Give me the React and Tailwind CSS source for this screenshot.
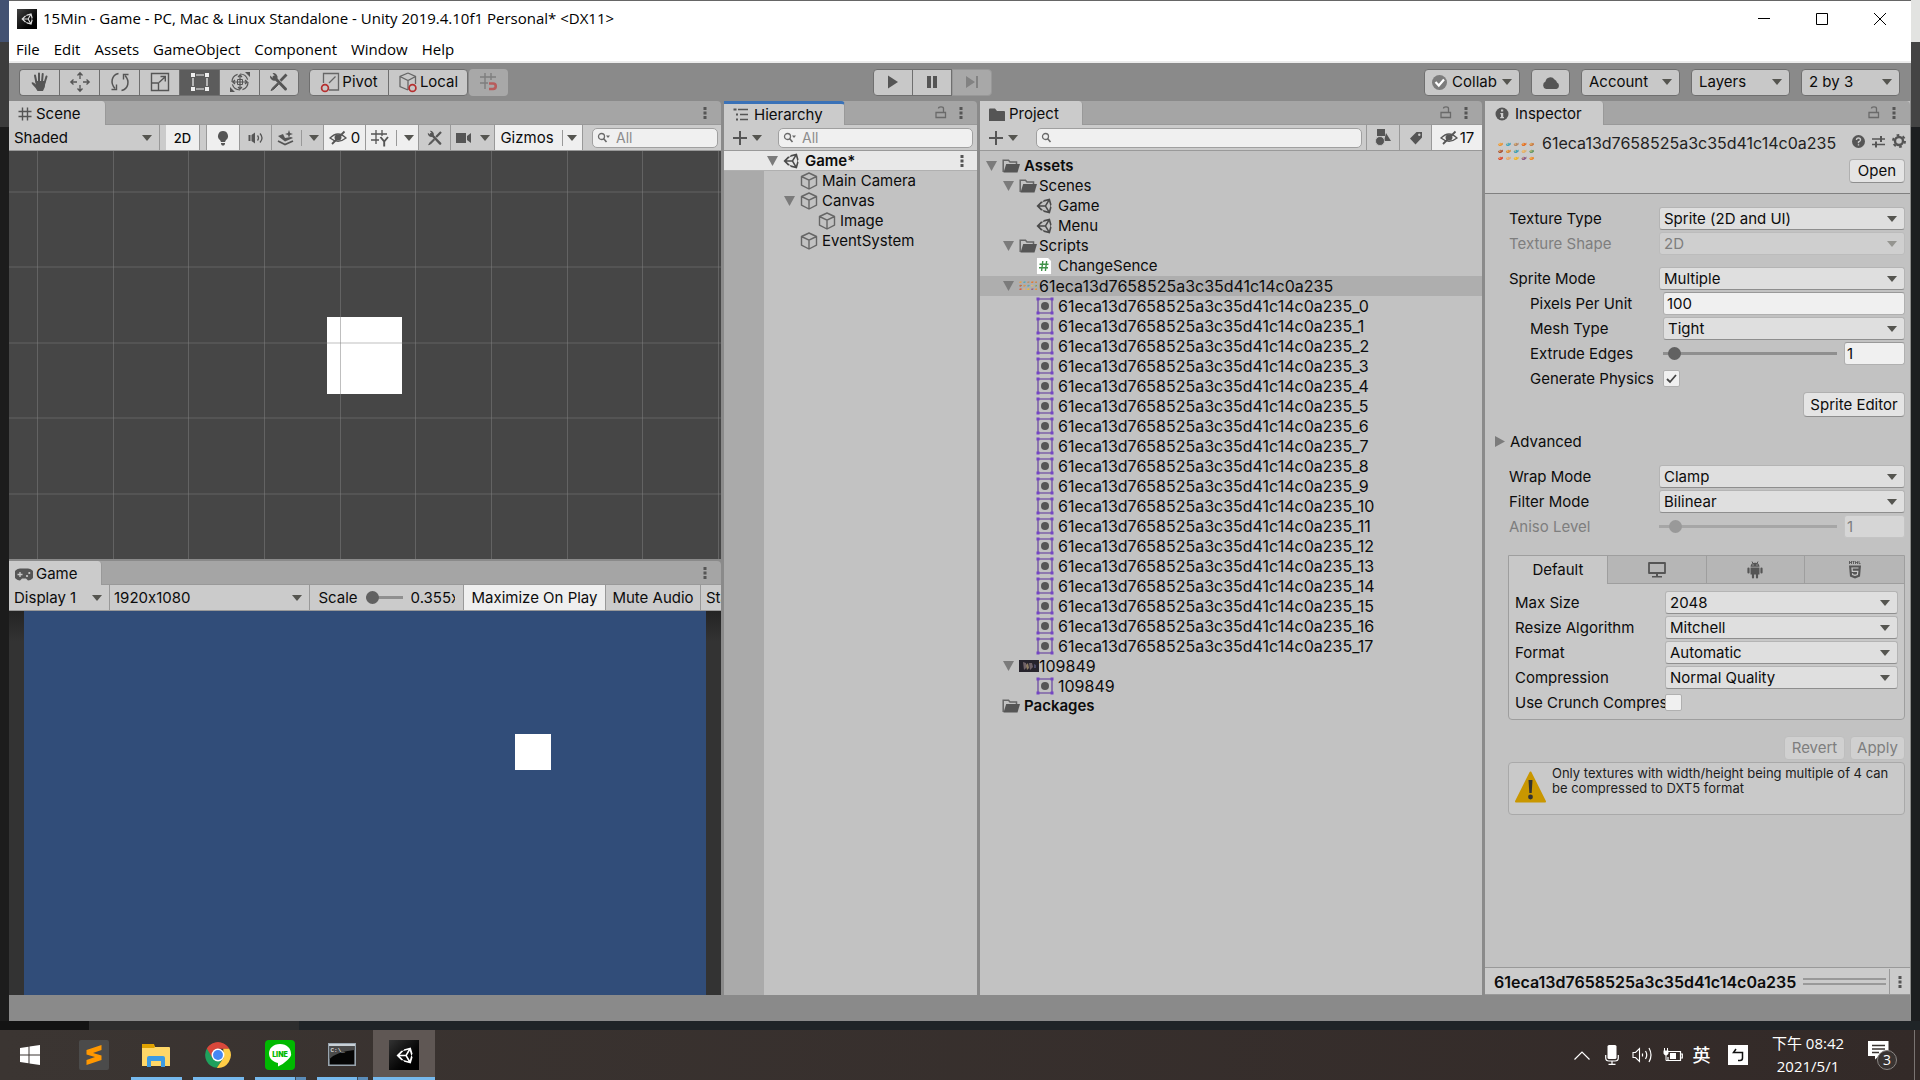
import { useState } from "react";
import clsx from "clsx";

const SPRITE = "61eca13d7658525a3c35d41c14c0a235";

/* ---------- icons ---------- */

const Svg = ({ w = 20, h = w, box, className, children }) => (
    <svg width={w} height={h} viewBox={box || `0 0 ${w} ${h}`} fill="none" className={clsx("shrink-0", className)} aria-hidden="true">
        {children}
    </svg>
)

const Arrow = ({ className = "text-[#555550]" }) => (
    <Svg w={10} h={6} className={className}><path d="M0 0H10L5 6Z" fill="currentColor" /></Svg>
)

const Fold = () => <Svg w={11} h={10} className="text-[#7b7b7b]"><path d="M0 0H11L5.5 10Z" fill="currentColor" /></Svg>

const Dots = () => (
    <Svg w={4} h={14} className="text-[#555]"><path d="M0.5 1h3v3h-3zM0.5 5.5h3v3h-3zM0.5 10h3v3h-3z" fill="currentColor" /></Svg>
)

const Lock = () => (
    <Svg w={12} h={13} className="text-[#6a6a6a]" >
        <path d="M1 6.500h9.500v5H1zM8.500 6V2.500C8.500 1 7.500 0.800 6 0.800S3.500 1 3.500 2.500" stroke="currentColor" strokeWidth="1.300" />
    </Svg>
)

const Plus = () => <Svg w={16} className="text-[#555]"><path d="M8 1v14M1 8h14" stroke="currentColor" strokeWidth="2" /></Svg>

const UnityIcon = ({ size = 16, className = "text-[#4a4a4a]" }) => (
    <Svg w={size} box="0 0 512 512" className={className}>
        <path fill="currentColor" d="M498.11 206.4L445.31 14.72 248.2 66.08 219 116.14l-59.2-.43L15.54 256l144.28 140.24 59.17-.43 29.22 50L445.31 497.14 498.11 305.6 468.15 256zM223.77 124.2L374.55 86.51 288 232.33H114.87zm0 263.63L114.87 279.71H288l86.55 145.81zm193.12 14L330.33 256l86.58-145.84L458.56 256z" />
    </Svg>
)

const Cube = ({ size = 18 }) => (
    <Svg w={size} box="0 0 18 18" className="text-[#666]">
        <path d="M9 1L16.500 4.500V13.200L9 17L1.500 13.200V4.500ZM1.500 4.500L9 8.200L16.500 4.500M9 8.200V17" stroke="currentColor" strokeWidth="1.400" strokeLinejoin="round" />
    </Svg>
)

const FolderOpen = () => (
    <Svg w={18} h={14}>
        <path d="M1.200 13V1.200H6.500L8 3H14.500V5" stroke="#666" strokeWidth="1.500" />
        <path d="M4.200 5H18L15.500 13.500H1.500Z" fill="#555" />
    </Svg>
)

const Folder = () => <Svg w={16} h={13}><path d="M0 1.500Q0 0.500 1 0.500H6L8 3H15Q16 3 16 4V13H0Z" fill="#555" /></Svg>

const SpriteIcon = () => (
    <Svg w={18}>
        <path d="M2 2H16V16H2Z" stroke="#7d62a8" strokeWidth="1.600" />
        <path d="M0.500 0.500h3v3h-3zM14.500 0.500h3v3h-3zM0.500 14.500h3v3h-3zM14.500 14.500h3v3h-3z" fill="#7445c4" />
        <circle cx="9" cy="9" r="4" fill="#555" />
    </Svg>
)

const ScriptIcon = () => (
    <Svg w={16} h={18}>
        <path d="M1 0.500H12L15.500 4V17.500H0.500V0.500Z" fill="#fff" stroke="#b0b0b0" strokeWidth="0.600" />
        <path d="M6.800 4L5.600 14M10.600 4L9.400 14M3.500 7.300H12.500M3 10.700H12" stroke="#3f9148" strokeWidth="1.400" />
    </Svg>
)

const critters = [
    ["#e8963c", "#3fa3c4", "#b3886a", "#e2702a", "#c9804a"],
    ["#a8553a", "#d98b3c", "#3f9fb8", "#e0b070", "#6a9a6a"],
    ["#d94a35", "#e0a878", "#edb52f", "#8a5a8a", "#e98a32"],
]

const SheetThumb = ({ w, h }) => (
    <Svg w={w} h={h} box="0 0 36 20">
        {critters.map((row, r) => row.map((color, c) => (
            <g key={r + "-" + c}>
                <path d={`M${c * 7.800 + 0.500} ${r * 7 + 2.500}q2 -3 4 -1l1 -1v2l-2 1.500h-2z`} fill={color} />
                <path d={`M${c * 7.800 + 1.500} ${r * 7 + 1.500}h1.500v1h-1.500z`} fill="#f6d27c" />
            </g>
        )))}
    </Svg>
)

const PhotoThumb = () => (
    <Svg w={20} h={12}>
        <path d="M0 0H20V12H0Z" fill="#26232c" />
        <path d="M4 2l3 1 1 4-3 3zM10 3h3l1 4-3 3z" fill="#6f6268" />
        <path d="M7 5l2-2 1 5-2 2z" fill="#8f7d62" />
        <path d="M15 4l2 1v3h-2z" fill="#4c4a66" />
    </Svg>
)

const EyeOff = () => (
    <Svg w={18} h={15} className="text-[#555]">
        <path d="M1 8Q9 0 17 8Q9 14.500 1 8Z" stroke="currentColor" strokeWidth="1.300" />
        <path d="M5.500 7.500a3.500 3 0 0 0 7 0a3.500 3 0 0 0-7 0" fill="currentColor" />
        <path d="M3 14L15.500 1.500" stroke="currentColor" strokeWidth="1.800" />
    </Svg>
)

const Tools = ({ size = 18 }) => (
    <Svg w={size} box="0 0 20 20" className="text-[#555]">
        <path d="M5 5L16.500 17" stroke="currentColor" strokeWidth="3" strokeLinecap="round" />
        <path d="M1 3.500L4 6L6 4.200L3.500 1A4.500 4.500 0 0 1 8.500 6.500L6.500 8.500A4.500 4.500 0 0 1 1 3.500Z" fill="currentColor" />
        <path d="M18.500 3.500L16.500 1.500L10.500 7.800L12.400 9.700Z" fill="currentColor" />
        <path d="M8.500 11L3.500 16L2 18.500L4.500 17.500L9.500 12.500Z" fill="currentColor" stroke="currentColor" />
    </Svg>
)

const GridIcon = ({ size = 14 }) => (
    <Svg w={size} box="0 0 14 14" className="text-[#555]">
        <path d="M4.500 0.500V13.500M9.500 0.500V13.500M0.500 4.500H13.500M0.500 9.500H13.500" stroke="currentColor" strokeWidth="1.400" />
    </Svg>
)

const SearchIcon = ({ menu }) => (
    <Svg w={14} h={12} className="text-[#6a6a6a]">
        <circle cx="4.500" cy="4.500" r="3" stroke="currentColor" strokeWidth="1.300" />
        <path d="M6.700 6.700L9.500 10" stroke="currentColor" strokeWidth="1.600" />
        {menu ? <path d="M9 3.500h4l-2 2.500z" fill="currentColor" /> : null}
    </Svg>
)

const transformTools = [
    {
        name: "Hand", icon: <Svg w={22} className="text-[#555]">
            <path d="M7.500 12L6 4.500M10 11V2.500M13 11L13.700 3M15.500 12L17.500 5.500" stroke="currentColor" strokeWidth="2" strokeLinecap="round" />
            <path d="M6.500 10H16.500Q16.500 16 14 20H8.500Q7 17 3 13Q2 11.500 3.200 11.200Q4.500 11 7 13.500Z" fill="currentColor" />
        </Svg>
    },
    {
        name: "Move", icon: <Svg w={22} className="text-[#555]">
            <path d="M11 2V8M11 14V20M2 11H8M14 11H20M8.500 4.500L11 1.800L13.500 4.500M8.500 17.500L11 20.200L13.500 17.500M4.500 8.500L1.800 11L4.500 13.500M17.500 8.500L20.200 11L17.500 13.500" stroke="currentColor" strokeWidth="1.300" />
        </Svg>
    },
    {
        name: "Rotate", icon: <Svg w={22} className="text-[#555]">
            <path d="M9.500 2.500C2.500 4 1 12 6 17.500M12.500 19.500C19.500 18 21 10 16 4.500" stroke="currentColor" strokeWidth="1.500" />
            <path d="M2.500 18.500H7.500V13.500M19.500 3.500H14.500V8.500" stroke="currentColor" strokeWidth="1.400" />
        </Svg>
    },
    {
        name: "Scale", icon: <Svg w={20} className="text-[#555]">
            <path d="M1.500 1.500H18.500V18.500H1.500ZM1.500 11H8.500V18.500" stroke="currentColor" strokeWidth="1.400" />
            <path d="M9 10.500L15 5M10.500 4.500H15.300V9.500" stroke="currentColor" strokeWidth="1.400" />
        </Svg>
    },
    {
        name: "Rect", icon: <Svg w={20} className="text-[#f0f0f0]">
            <path d="M3 6V14M17 6V14M6 3H14M6 17H14" stroke="currentColor" strokeWidth="1.200" />
            <path d="M1 1h4v4h-4zM15 1h4v4h-4zM1 15h4v4h-4zM15 15h4v4h-4z" fill="currentColor" />
        </Svg>
    },
    {
        name: "Transform", icon: <Svg w={22} className="text-[#555]">
            <circle cx="11" cy="11" r="8" stroke="currentColor" strokeWidth="1.200" strokeDasharray="10 2.500" />
            <path d="M11 4V18M4 11H18M9 6L11 3.800L13 6M9 16L11 18.200L13 16M6 9L3.800 11L6 13M16 9L18.200 11L16 13" stroke="currentColor" strokeWidth="1.200" />
            <path d="M8.500 8.500h5v5h-5z" stroke="currentColor" strokeWidth="1" />
            <path d="M16 1h5v5zM1 16v5h5z" fill="currentColor" />
        </Svg>
    },
    { name: "Custom", icon: <Tools size={20} /> },
]

/* ---------- shared controls ---------- */

const Select = ({ id, label, value, disabled, className = "", pad = "pl-[5px]" }) => (
    <span className={clsx("relative flex items-center min-w-0", className)}>
        <select
            id={id}
            aria-label={label}
            disabled={disabled}
            className={clsx("w-full h-full appearance-none bg-transparent pr-6 leading-5 outline-none disabled:opacity-100 disabled:text-[#7e7e7e]", pad)}
        >
            <option>{value}</option>
        </select>
        <Arrow className={clsx("absolute right-[7px] pointer-events-none", disabled ? "text-[#959590]" : "text-[#555550]")} />
    </span>
)

const boxed = "h-[23px] flex-1 rounded-[3px] border border-[#b4b4b4] border-b-[#8e8e8e] bg-[#dfdfdf]";
const boxedOff = "h-[23px] flex-1 rounded-[3px] border border-[#bcbcbc] bg-[#cfcfcf]";
const mainBtn = "h-[27px] flex items-center justify-center border border-[#6f6f6f] bg-[#c8c8c8]";

const Row = ({ id, label, indent, disabled, children }) => (
    <div className={clsx("flex h-[25px] items-center", indent && "pl-[21px]")}>
        <label htmlFor={id} className={clsx("shrink-0 overflow-hidden whitespace-nowrap", indent ? "w-[133px]" : "w-[150px]", disabled && "text-[#7e7e7e]")}>
            {label}
        </label>
        {children}
    </div>
)

const Popup = ({ id, label, value, disabled, indent }) => (
    <Row id={id} label={label} indent={indent} disabled={disabled}>
        <Select id={id} value={value} disabled={disabled} className={disabled ? boxedOff : boxed} pad="pl-1" />
    </Row>
)

const Slider = ({ id, label, disabled, indent }) => (
    <Row id={id} label={label} indent={indent} disabled={disabled}>
        <input
            id={id}
            type="range"
            min="0"
            max="16"
            defaultValue={indent ? "0.5" : "1"}
            step="0.5"
            disabled={disabled}
            className={clsx(
                "h-[13px] min-w-0 flex-1 appearance-none [&::-webkit-slider-thumb]:appearance-none [&::-webkit-slider-thumb]:size-[13px] [&::-webkit-slider-thumb]:rounded-full",
                disabled
                    ? "bg-[linear-gradient(transparent_5px,#a6a6a6_5px,#a6a6a6_8px,transparent_8px)] [&::-webkit-slider-thumb]:bg-[#999]"
                    : "bg-[linear-gradient(transparent_5px,#8f8f8f_5px,#8f8f8f_8px,transparent_8px)] [&::-webkit-slider-thumb]:bg-[#616161]"
            )}
        />
        <input
            aria-label={label + " value"}
            defaultValue="1"
            disabled={disabled}
            className={clsx("ml-[7px] h-[23px] w-[61px] rounded-[3px] border px-[2px] outline-none", disabled ? "border-[#c4c4c4] bg-[#d6d6d6] text-[#7e7e7e]" : "border-[#b0b0b0] border-t-[#999] bg-[#f0f0f0]")}
        />
    </Row>
)

const CheckBox = ({ id, checked }) => (
    <span className="relative flex">
        <input id={id} type="checkbox" defaultChecked={checked} className="peer size-[17px] appearance-none rounded-[2px] border border-[#b0b0b0] bg-[#f0f0f0]" />
        <Svg w={17} className="absolute left-0 top-0 hidden text-[#444] pointer-events-none peer-checked:block">
            <path d="M4 9L7 12L13 5" stroke="currentColor" strokeWidth="1.800" />
        </Svg>
    </span>
)

const TabBar = ({ icon, label, width, focused, lock }) => (
    <div className="flex h-6 shrink-0 items-center rounded-tr-[4px] border-b border-[#999] bg-[#a5a5a5] pr-[14px]">
        <button className={clsx("-mb-px flex h-6 items-center gap-1 rounded-tr-[4px] border-r border-[#999] bg-[#cbcbcb] pl-[9px] whitespace-nowrap", width, focused ? "border-t-[3px] border-t-[#3a72b8]" : "pt-[2px]")}>
            {icon}
            {label}
        </button>
        <span className="ml-auto flex items-center gap-3">
            {lock && <button aria-label={"Lock " + label}><Lock /></button>}
            <button aria-label={label + " menu"}><Dots /></button>
        </span>
    </div>
)

const Search = ({ placeholder, menu, label, className }) => (
    <span className={clsx("flex h-5 min-w-0 items-center gap-[5px] rounded-[5px] border border-[#a0a0a0] bg-[#f0f0f0] pl-1", className)}>
        <SearchIcon menu={menu} />
        <input type="search" aria-label={label} placeholder={placeholder} className="w-full min-w-0 bg-transparent text-[14px] outline-none placeholder:text-[#8c8c8c]" />
    </span>
)

const cell = "flex h-full shrink-0 items-center justify-center border-r border-[#999] whitespace-nowrap";

/* ---------- window header ---------- */

const TitleBar = () => (
    <header className="shrink-0 border-b-2 border-[#ececec] bg-white pb-[2px] font-['Open_Sans','Noto_Sans',sans-serif] text-black">
        <div className="flex h-9 items-center pr-[2px] pl-2">
            <span className="flex size-5 items-center justify-center bg-linear-to-br from-[#444] to-black">
                <UnityIcon size={12} className="text-[#ddd]" />
            </span>
            <h1 className="ml-[6px] pb-[2px] text-[15px]">15Min - Game - PC, Mac &amp; Linux Standalone - Unity 2019.4.10f1 Personal* &lt;DX11&gt;</h1>
            <div className="ml-auto flex">
                <button aria-label="Minimize" className="flex w-[58px] justify-center"><Svg w={12}><path d="M0 5.500H12" stroke="#000" /></Svg></button>
                <button aria-label="Maximize" className="flex w-[58px] justify-center"><Svg w={12}><path d="M0.500 0.500H11.500V11.500H0.500Z" stroke="#000" /></Svg></button>
                <button aria-label="Close" className="flex w-[58px] justify-center"><Svg w={12}><path d="M0 0L12 12M12 0L0 12" stroke="#000" /></Svg></button>
            </div>
        </div>
        <nav className="flex h-[22px] items-center gap-[14px] pt-[2px] pl-[7px] text-[15px]">
            {["File", "Edit", "Assets", "GameObject", "Component", "Window", "Help"].map((item) => (
                <button key={item} className="whitespace-nowrap">{item}</button>
            ))}
        </nav>
    </header>
)

const MainToolbar = () => {

    const [ tool, setTool ] = useState("Rect");

    return (
        <div className="grid h-[38px] shrink-0 grid-cols-[1fr_auto_1fr] items-center bg-[#8a8a8a] pr-[11px] pl-[10px]">
            <div className="flex">
                {transformTools.map(({ name, icon }, i) => (
                    <button
                        key={name}
                        aria-label={name + " tool"}
                        onClick={() => setTool(name)}
                        className={clsx(
                            "flex h-[27px] w-10 items-center justify-center border-y border-l border-[#6f6f6f]",
                            i == 0 && "rounded-l-[4px]",
                            i == 6 && "rounded-r-[4px] border-r",
                            tool == name ? "bg-[#5c5c5c]" : "bg-[#c8c8c8]"
                        )}
                    >
                        {icon}
                    </button>
                ))}
                <button className={clsx(mainBtn, "ml-[10px] w-20 gap-[2px] rounded-l-[4px]")}>
                    <Svg w={20} h={22}>
                        <path d="M3.500 12V2.500H18.500V19H9" stroke="#666" strokeWidth="1.300" />
                        <path d="M9 12L15.500 5.500" stroke="#666" strokeWidth="1.300" />
                        <circle cx="5" cy="17" r="3.400" stroke="#b52f2f" strokeWidth="1.700" />
                    </Svg>
                    Pivot
                </button>
                <button className={clsx(mainBtn, "-ml-px w-20 gap-[2px] rounded-r-[4px]")}>
                    <Svg w={20} h={22}>
                        <path d="M10 2L17.500 5.500V13M10 19L2 15.500V5.500L10 2M2 5.500L10 9.500L17.500 5.500M10 9.500V19" stroke="#666" strokeWidth="1.300" />
                        <circle cx="14.500" cy="17" r="3.400" fill="#c8c8c8" stroke="#b52f2f" strokeWidth="1.700" />
                    </Svg>
                    Local
                </button>
                <button disabled aria-label="Snap" className="ml-px flex h-[27px] w-[39px] items-center justify-center rounded-[4px] bg-[#a8a8a8]">
                    <Svg w={20}>
                        <path d="M6 1V17M12 1V8M1 5H17M1 11H9" stroke="#7e7e7e" strokeWidth="1.400" />
                        <path d="M10 11.500H14A2.500 2.500 0 0 1 14 17H10" stroke="#b85c5c" strokeWidth="2.600" />
                    </Svg>
                </button>
            </div>
            <div className="mr-[54px] flex">
                <button aria-label="Play" className={clsx(mainBtn, "w-10 rounded-l-[4px]")}><Svg w={12} h={14}><path d="M1 0.500L11 7L1 13.500Z" fill="#555" /></Svg></button>
                <button aria-label="Pause" className={clsx(mainBtn, "-ml-px w-10")}><Svg w={10} h={12}><path d="M0 0h4v12h-4zM6 0h4v12h-4z" fill="#555" /></Svg></button>
                <button aria-label="Step" disabled className="flex h-[27px] w-10 items-center justify-center rounded-r-[4px] border border-[#989898] bg-[#a8a8a8]">
                    <Svg w={14} h={12}><path d="M1 0L10 6L1 12ZM11 0h2v12h-2z" fill="#828282" /></Svg>
                </button>
            </div>
            <div className="flex justify-end gap-[11px]">
                <button className={clsx(mainBtn, "w-[96px] gap-[5px] rounded-[4px]")}>
                    <Svg w={15}><circle cx="7.500" cy="7.500" r="7.500" fill="#7c7c7c" /><path d="M3.500 7L6.800 10.500L12 4.500" stroke="#fff" strokeWidth="2.200" /></Svg>
                    Collab
                    <Arrow />
                </button>
                <button aria-label="Services" className={clsx(mainBtn, "w-[39px] rounded-[4px]")}>
                    <Svg w={18} h={13}><path d="M4 13A4 4 0 0 1 3.500 5.500A5 5 0 0 1 12.500 3.500A4 4 0 0 1 15 6.500A3.500 3.500 0 0 1 14.500 13Z" fill="#555" /></Svg>
                </button>
                {["Account", "Layers", "2 by 3"].map((item) => (
                    <Select key={item} label={item} value={item} pad="pl-[7px]" className="h-[27px] w-[99px] rounded-[4px] border border-[#6f6f6f] bg-[#c8c8c8]" />
                ))}
            </div>
        </div>
    )
}

/* ---------- scene and game ---------- */

const Scene = () => (
    <section className="flex min-h-0 min-w-0 flex-col">
        <TabBar label="Scene" width="w-[97px]" icon={<GridIcon />} />
        <div className="flex h-[26px] shrink-0 items-center border-b border-[#999] bg-[#cbcbcb]">
            <Select label="Shading mode" value="Shaded" className="h-full w-[151px] border-r border-[#999]" />
            <button className={clsx(cell, "ml-[6px] w-[34px] bg-[#efefef] text-[13px] font-medium")}>2D</button>
            <button aria-label="Lighting" className={clsx(cell, "ml-[6px] w-[34px] border-l bg-[#efefef]")}>
                <Svg w={12} h={16}><path d="M6 1A5 5 0 0 0 3 10L4 12H8L9 10A5 5 0 0 0 6 1ZM4 13h4v1l-1 1.500h-2l-1-1.500z" fill="#555" /></Svg>
            </button>
            <button aria-label="Audio" className={clsx(cell, "w-8")}>
                <Svg w={16} h={12}>
                    <path d="M0.500 3h2v6h-2zM3.500 3L7 0.500V11.500L3.500 9Z" fill="#555" />
                    <path d="M9.500 3.500Q11.500 6 9.500 8.500M12 1.500Q16 6 12 10.500" stroke="#555" strokeWidth="1.300" />
                </Svg>
            </button>
            <button aria-label="Effects" className={clsx(cell, "w-[52px] gap-[7px]")}>
                <Svg w={17} h={16}>
                    <path d="M1 6L6 4L8 8L14 7L16 8L8 11.500Z" fill="#555" />
                    <path d="M1 11L8 14.500L16 11" stroke="#555" strokeWidth="1.800" />
                    <path d="M12 0L13 3L16 4L13 5L12 8L11 5L8 4L11 3Z" fill="#555" />
                </Svg>
                <span className="h-4 w-px bg-[#999]"></span>
                <Arrow />
            </button>
            <button className={clsx(cell, "w-[42px] gap-1 bg-[#efefef]")}><EyeOff />0</button>
            <button aria-label="Grid axis" className={clsx(cell, "w-[53px] gap-[7px] bg-[#efefef]")}>
                <Svg w={18}>
                    <path d="M5 1V15M11 1V7M0 5H16M0 11H8" stroke="#555" strokeWidth="1.300" />
                    <path d="M9.500 8L13.200 12.500L17 8M13.200 12.500V17.500" stroke="#555" strokeWidth="1.900" />
                </Svg>
                <span className="h-4 w-px bg-[#999]"></span>
                <Arrow />
            </button>
            <button aria-label="Component tools" className={clsx(cell, "w-8")}><Tools size={16} /></button>
            <button aria-label="Camera" className={clsx(cell, "w-11 gap-2")}>
                <Svg w={16} h={12}><path d="M0 1h10v10h-10zM11 4L15 1V11L11 8Z" fill="#555" /></Svg>
                <Arrow />
            </button>
            <button className={clsx(cell, "w-[88px] gap-2 bg-[#efefef]")}>
                Gizmos
                <span className="-mr-1 h-4 w-px bg-[#999]"></span>
                <Arrow />
            </button>
            <Search label="Search scene" placeholder="All" menu className="mr-[3px] ml-[9px] flex-1" />
        </div>
        <div className="relative flex-1 overflow-hidden bg-[#464646]">
            <svg className="absolute inset-0 h-full w-full" aria-label="Scene view">
                <rect x="318" y="166" width="75" height="77" fill="#fff" />
                <g stroke="#808080" strokeOpacity="0.500">
                    {[28.5, 104.5, 179.5, 255.5, 331.5, 406.5, 482.5, 558.5, 633.5, 709.5].map((x) => <line key={x} x1={x} x2={x} y1="0" y2="100%" />)}
                </g>
                <g stroke="#808080" strokeOpacity="0.250" strokeWidth="2">
                    {[41, 116, 192, 267, 343].map((y) => <line key={y} y1={y} y2={y} x1="0" x2="100%" />)}
                </g>
            </svg>
        </div>
    </section>
)

const Game = () => (
    <section className="flex min-h-0 min-w-0 flex-col">
        <TabBar label="Game" width="w-[93px]" icon={
            <Svg w={18} h={13} className="-mr-px -ml-[3px]">
                <path d="M5 0.500H13A5 5 0 0 1 13 12.500L11 10.500H7L5 12.500A5 5 0 0 1 5 0.500Z" fill="#555" />
                <path d="M5 4V9M2.500 6.500H7.500" stroke="#cbcbcb" strokeWidth="1.300" />
                <circle cx="12" cy="8" r="1.100" fill="#cbcbcb" /><circle cx="14.300" cy="5" r="1.100" fill="#cbcbcb" />
            </Svg>
        } />
        <div className="flex h-[26px] shrink-0 items-center overflow-hidden border-b border-[#999] bg-[#cbcbcb]">
            <Select label="Display" value="Display 1" className="h-full w-[101px] shrink-0 border-r border-[#999]" />
            <Select label="Resolution" value="1920x1080" pad="pl-1" className="h-full w-[200px] shrink-0 border-r border-[#999]" />
            <div className={clsx(cell, "w-[154px] gap-2")}>
                <label htmlFor="scale">Scale</label>
                <input id="scale" type="range" min="1" max="5" defaultValue="1" className="h-[13px] w-[37px] appearance-none bg-[linear-gradient(transparent_5px,#8f8f8f_5px,#8f8f8f_8px,transparent_8px)] [&::-webkit-slider-thumb]:size-[13px] [&::-webkit-slider-thumb]:appearance-none [&::-webkit-slider-thumb]:rounded-full [&::-webkit-slider-thumb]:bg-[#616161]" />
                <span className="w-[44px] overflow-hidden">0.355x</span>
            </div>
            <button className={clsx(cell, "w-[142px] bg-[#efefef]")}>Maximize On Play</button>
            <button className={clsx(cell, "w-[95px]")}>Mute Audio</button>
            <button className="pl-[5px]">Stats</button>
        </div>
        <div className="flex flex-1 bg-linear-to-b from-[#242424] to-[#333] to-8% px-[15px]">
            <div className="relative flex-1 bg-[#314d79]">
                <div className="absolute top-[123px] left-[491px] size-9 bg-white"></div>
            </div>
        </div>
    </section>
)

/* ---------- hierarchy ---------- */

const objects = [
    { name: "Main Camera", pad: "pl-9" },
    { name: "Canvas", pad: "pl-5", open: true },
    { name: "Image", pad: "pl-[54px]" },
    { name: "EventSystem", pad: "pl-9" },
]

const Hierarchy = () => (
    <section className="flex min-h-0 flex-col">
        <TabBar label="Hierarchy" width="w-[121px]" focused lock icon={
            <Svg w={16} h={13} className="mr-px">
                <path d="M5 1.500H15M7 6.500H15M7 11.500H15" stroke="#555" strokeWidth="1.500" />
                <path d="M0.500 0.500h3v2h-3zM3 5.500h2v2h-2zM3 10.500h2v2h-2z" fill="#555" />
            </Svg>
        } />
        <div className="flex h-[26px] shrink-0 items-center border-b border-[#999] bg-[#cbcbcb] pr-1 pl-2">
            <button aria-label="Create object" className="flex items-center gap-1"><Plus /><Arrow /></button>
            <Search label="Search hierarchy" placeholder="All" menu className="ml-4 flex-1" />
        </div>
        <div className="flex h-5 shrink-0 items-center border-b border-[#b0b0b0] bg-[#e8e8e8] pr-[13px] pl-[43px]">
            <Fold />
            <span className="mr-[6px] ml-[5px]"><UnityIcon size={16} /></span>
            <b className="font-semibold">Game*</b>
            <button aria-label="Game scene menu" className="ml-auto"><Dots /></button>
        </div>
        <div className="flex-1 border-l-[40px] border-[#aaa] bg-[#c2c2c2]">
            <ul>
                {objects.map(({ name, pad, open }) => (
                    <li key={name} className={clsx("flex h-5 items-center whitespace-nowrap", pad)}>
                        {open && <span className="mr-[5px]"><Fold /></span>}
                        <Cube />
                        <span className="ml-1">{name}</span>
                    </li>
                ))}
            </ul>
        </div>
    </section>
)

/* ---------- project ---------- */

const assets = [
    { name: "Assets", pad: "pl-[6px]", icon: <FolderOpen />, fold: true, bold: true },
    { name: "Scenes", pad: "pl-[23px]", icon: <FolderOpen />, fold: true },
    { name: "Game", pad: "pl-14", icon: <UnityIcon /> },
    { name: "Menu", pad: "pl-14", icon: <UnityIcon /> },
    { name: "Scripts", pad: "pl-[23px]", icon: <FolderOpen />, fold: true },
    { name: "ChangeSence", pad: "pl-14", icon: <ScriptIcon /> },
    { name: SPRITE, pad: "pl-[23px]", icon: <SheetThumb w={18} h={10} />, fold: true, selected: true, long: true },
    ...Array.from({ length: 18 }, (_, i) => ({ name: SPRITE + "_" + i, pad: "pl-14", icon: <SpriteIcon />, long: true })),
    { name: "109849", pad: "pl-[23px]", icon: <PhotoThumb />, fold: true, long: true },
    { name: "109849", pad: "pl-14", icon: <SpriteIcon />, long: true },
    { name: "Packages", pad: "pl-[22px]", icon: <FolderOpen />, bold: true },
]

const Project = () => (
    <section className="flex min-h-0 flex-col">
        <TabBar label="Project" width="w-[103px]" lock icon={<Folder />} />
        <div className="flex h-[26px] shrink-0 items-center border-b border-[#999] bg-[#cbcbcb]">
            <button aria-label="Create asset" className="flex items-center gap-1 pl-2"><Plus /><Arrow /></button>
            <Search label="Search project" className="mr-1 ml-[18px] flex-1" />
            <button aria-label="Filter by type" className={clsx(cell, "w-[34px] border-l")}>
                <Svg w={16} h={17}><path d="M2 0h8v7h-8zM11 4L16 12H9Z" fill="#555" /><circle cx="5" cy="12" r="4.500" fill="#555" stroke="#cbcbcb" strokeWidth="0.800" /></Svg>
            </button>
            <button aria-label="Filter by label" className={clsx(cell, "w-8")}>
                <Svg w={14}><path d="M1 7.500L7.500 1H13V6.500L6.500 13.500Z" fill="#555" /><circle cx="10.300" cy="3.800" r="1.200" fill="#cbcbcb" /></Svg>
            </button>
            <button className="flex h-full w-[50px] items-center justify-center gap-[2px] bg-[#efefef]"><EyeOff />17</button>
        </div>
        <ul className="flex-1 overflow-hidden bg-[#c2c2c2] pt-[5px]">
            {assets.map(({ name, pad, icon, fold, bold, selected, long }, i) => (
                <li key={i} className={clsx("flex h-5 items-center whitespace-nowrap", pad, selected && "bg-[#aeaeae]", long && "text-[16px]")}>
                    {fold && <span className="mr-[5px]"><Fold /></span>}
                    <span className={clsx("flex shrink-0", fold && !bold ? "w-5" : "w-[22px]")}>{icon}</span>
                    {bold ? <b className="font-semibold">{name}</b> : name}
                </li>
            ))}
        </ul>
    </section>
)

/* ---------- inspector ---------- */

const platforms = [
    {
        name: "Standalone", icon: <Svg w={18} h={16}><path d="M1 1H17V11H1Z" stroke="#555" strokeWidth="1.800" strokeLinejoin="round" /><path d="M8 12h2v2h4v1.500h-10v-1.500h4z" fill="#555" /></Svg>
    },
    {
        name: "Android", icon: <Svg w={16} h={18}>
            <path d="M3.500 5.800Q3.800 2 8 1.800T12.500 5.800ZM3.500 6.600H12.500V13.500H3.500Z" fill="#555" />
            <path d="M5 0.500L6 2.500M11 0.500L10 2.500" stroke="#555" />
            <path d="M1.500 7.500V11.500M14.500 7.500V11.500M6 13V16.500M10 13V16.500" stroke="#555" strokeWidth="2.200" strokeLinecap="round" />
            <path d="M5.500 3.600h1v1h-1zM9.500 3.600h1v1h-1z" fill="#c8c8c8" />
        </Svg>
    },
    {
        name: "WebGL", icon: <Svg w={14} h={18}>
            <path d="M1.500 0v3M3.500 0v3M1.500 1.500h2M4.500 0.500h2M5.500 0.500v2.500M7.500 3V0.500L8.500 2L9.500 0.500V3M11 0v2.600h1.500" stroke="#555" strokeWidth="0.900" />
            <path d="M1 4.500H13L12 15.500L7 17.500L2 15.500Z" fill="#555" />
            <path d="M10.500 7H4L4.300 10.300H9.800L9.400 13.500L7 14.300L4.600 13.500L4.500 12.300" stroke="#c8c8c8" strokeWidth="1.200" />
        </Svg>
    },
]

const Inspector = () => {

    const [ ppu, setPpu ] = useState("100");

    return (
        <section className="flex min-h-0 flex-col bg-[#c2c2c2]">
            <TabBar label="Inspector" width="w-[119px]" lock icon={
                <Svg w={17} h={14}><circle cx="8" cy="7" r="6.500" fill="#555" /><path d="M7 2.500h2.200v2h-2.200zM6.300 6h2.900v4h0.800v1.300h-3.800v-1.300h0.800v-2.700h-0.700z" fill="#cbcbcb" /></Svg>
            } />
            <div className="flex h-[69px] shrink-0 border-b border-[#808080] bg-[#cbcbcb] pr-1 pl-3">
                <span className="pt-[17px]"><SheetThumb w={37} h={20} /></span>
                <div className="ml-2 min-w-0 flex-1">
                    <div className="flex items-center pt-[6px]">
                        <h2 className="min-w-0 flex-1 overflow-hidden text-[16px] leading-6 whitespace-nowrap text-[#222]">{SPRITE}</h2>
                        <span className="mb-1 ml-[9px] flex items-center gap-[7px]">
                            <button aria-label="Help"><Svg w={13}><circle cx="6.500" cy="6.500" r="6.500" fill="#555" /><path d="M4.500 5Q4.500 3 6.500 3T8.500 5Q8.500 6 6.500 7V8.200M6.500 9.200V10.600" stroke="#cbcbcb" strokeWidth="1.400" /></Svg></button>
                            <button aria-label="Presets"><Svg w={13}><path d="M0 4H13M0 9.500H13" stroke="#555" strokeWidth="1.500" /><path d="M8 1h2v6h-2zM3 6.500h2v6h-2z" fill="#555" /></Svg></button>
                            <button aria-label="Settings">
                                <Svg w={14}><circle cx="7" cy="7" r="4" stroke="#555" strokeWidth="2.400" /><circle cx="7" cy="7" r="6" stroke="#555" strokeWidth="2" strokeDasharray="2.700 3.580" /></Svg>
                            </button>
                        </span>
                    </div>
                    <button className="mt-1 mr-px ml-auto flex h-6 w-[56px] items-center justify-center rounded-[4px] border border-[#b0b0b0] border-b-[#8e8e8e] bg-[#e4e4e4]">Open</button>
                </div>
            </div>

            <form className="flex flex-1 flex-col pt-3 pr-[5px] pl-[23px]" onSubmit={(e) => e.preventDefault()}>
                <div className="pl-px">
                    <Popup id="textureType" label="Texture Type" value="Sprite (2D and UI)" />
                    <Popup id="textureShape" label="Texture Shape" value="2D" disabled />
                    <div className="mt-[10px]">
                        <Popup id="spriteMode" label="Sprite Mode" value="Multiple" />
                        <Row id="ppu" label="Pixels Per Unit" indent>
                            <input id="ppu" value={ppu} onChange={(e) => setPpu(e.target.value)} className="h-[23px] min-w-0 flex-1 rounded-[3px] border border-[#b0b0b0] border-t-[#999] bg-[#f0f0f0] px-[3px] outline-none" />
                        </Row>
                        <Popup id="meshType" label="Mesh Type" value="Tight" indent />
                        <Slider id="extrude" label="Extrude Edges" indent />
                        <Row id="physics" label="Generate Physics" indent><CheckBox id="physics" checked /></Row>
                        <button className="mt-px ml-auto flex h-[25px] w-[102px] items-center justify-center rounded-[4px] border border-[#b0b0b0] border-b-[#8e8e8e] bg-[#e4e4e4]">Sprite Editor</button>
                    </div>
                </div>
                <button className="mt-3 -ml-[13px] flex h-[25px] items-center gap-[5px]">
                    <Svg w={10} h={11}><path d="M0 0L10 5.500L0 11Z" fill="#7b7b7b" /></Svg>
                    Advanced
                </button>
                <div className="mt-[10px] pl-px">
                    <Popup id="wrapMode" label="Wrap Mode" value="Clamp" />
                    <Popup id="filterMode" label="Filter Mode" value="Bilinear" />
                    <Slider id="aniso" label="Aniso Level" disabled />
                </div>

                <div className="mt-4 rounded-b-[4px] border border-[#9e9e9e] bg-[#c8c8c8]">
                    <div className="grid h-7 grid-cols-4">
                        <button className="border-r border-[#9e9e9e]">Default</button>
                        {platforms.map(({ name, icon }) => (
                            <button key={name} aria-label={name} className="flex items-center justify-center border-r border-b border-[#9e9e9e] bg-[#b6b6b6] last:border-r-0">{icon}</button>
                        ))}
                    </div>
                    <div className="px-[6px] pt-[6px] pb-1">
                        <Popup id="maxSize" label="Max Size" value="2048" />
                        <Popup id="resize" label="Resize Algorithm" value="Mitchell" />
                        <Popup id="format" label="Format" value="Automatic" />
                        <Popup id="compression" label="Compression" value="Normal Quality" />
                        <Row id="crunch" label="Use Crunch Compression"><CheckBox id="crunch" /></Row>
                    </div>
                </div>

                <div className="mt-4 flex justify-end gap-[5px] text-[#7e7e7e]">
                    <button disabled className="h-6 w-[61px] rounded-[4px] border border-[#bebebe] bg-[#d0d0d0]">Revert</button>
                    <button disabled className="h-6 w-[55px] rounded-[4px] border border-[#bebebe] bg-[#d0d0d0]">Apply</button>
                </div>
                <div className="mt-[2px] flex h-[53px] shrink-0 gap-[6px] rounded-[4px] border border-[#a9a9a9] bg-[#c9c9c9] pt-[3px] pr-1 pl-[6px]">
                    <Svg w={31} h={32} className="mt-[5px]">
                        <path d="M15.500 1.500L30 30.500H1Z" fill="#c99700" stroke="#c99700" strokeWidth="2" strokeLinejoin="round" />
                        <path d="M13.500 9H17.500L16.700 22H14.300Z" fill="#333" /><circle cx="15.500" cy="26" r="2.400" fill="#333" />
                    </Svg>
                    <p className="text-[13px] leading-[15px] text-[#1c1c1c]">Only textures with width/height being multiple of 4 can be compressed to DXT5 format</p>
                </div>
            </form>

            <footer className="flex h-7 shrink-0 items-center border-y border-[#999] bg-[#cbcbcb] pt-px pl-[9px]">
                <b className="text-[16px] font-semibold whitespace-nowrap">{SPRITE}</b>
                <span className="mr-[3px] ml-[7px] h-[7px] min-w-0 flex-1 border-y-2 border-[#999]"></span>
                <button aria-label="Preview menu" className="flex h-full w-[21px] items-center justify-center border-l border-[#999]"><Dots /></button>
            </footer>
        </section>
    )
}

/* ---------- taskbar ---------- */

const apps = [
    {
        name: "Sublime Text", icon: <Svg w={30}>
            <rect width="30" height="30" rx="2" fill="#4b4b4b" />
            <path d="M7.500 10L22.500 5V10L14 13L22.500 15.500V20L7.500 25V20L16 17L7.500 14.500Z" fill="#ff9800" />
        </Svg>
    },
    {
        name: "Explorer", bar: true, icon: <Svg w={28} h={24}>
            <path d="M0 2Q0 1 1 1H11L13 4H27Q28 4 28 5V23H0Z" fill="#ffd767" /><path d="M0 1H12L13 4L12 5H0Z" fill="#e0a200" />
            <path d="M5 24V15Q5 13 7 13H21Q23 13 23 15V24H19V18H9V24Z" fill="#3d9be2" />
        </Svg>
    },
    {
        name: "Chrome", bar: true, icon: <Svg w={28} box="0 0 48 48">
            <path d="M24 24L4.900 13A22 22 0 0 1 43 13L24 13Z" fill="#d9483b" />
            <path d="M4.900 13A22 22 0 0 0 22 46L33 29L24 24Z" fill="#1fa15d" />
            <path d="M43 13A22 22 0 0 1 22 46L33.500 29L33 13Z" fill="#ffcd46" />
            <path d="M4.900 13L15 30L24 24V13L43 13A22 22 0 0 0 4.900 13Z" fill="#d9483b" />
            <circle cx="24" cy="24" r="11" fill="#fff" /><circle cx="24" cy="24" r="8.500" fill="#4587f3" />
        </Svg>
    },
    {
        name: "LINE", bar: true, multi: true, icon: <Svg w={30}>
            <rect width="30" height="30" rx="4" fill="#00b900" />
            <path d="M15 4C8 4 4 8.500 4 13.500S8 22 13 23V26.500Q18 24.500 22.500 20T26 13.500C26 8.500 22 4 15 4Z" fill="#fff" />
            <text x="15" y="16.500" textAnchor="middle" fontSize="7" fontWeight="900" fontFamily="Inter, sans-serif" fill="#00b900">LINE</text>
        </Svg>
    },
    {
        name: "Command Prompt", bar: true, multi: true, icon: <Svg w={28} h={24}>
            <path d="M0.800 0.800H27.200V22.200H0.800Z" fill="#050505" stroke="#98a4ae" strokeWidth="1.600" />
            <path d="M1.500 1.500H26.500V7Q8 9 1.500 16Z" fill="#4a4a4a" /><path d="M1 1H27V3H1Z" fill="#c8d0d6" />
            <text x="2.500" y="9" fontSize="6" fontFamily="Liberation Mono, monospace" fill="#fff">C:\_</text>
        </Svg>
    },
    {
        name: "Unity", bar: true, active: true, icon: <span className="flex size-[30px] items-center justify-center bg-linear-to-br from-[#333] to-black"><UnityIcon size={17} className="text-white" /></span>
    },
]

const Taskbar = () => (
    <footer className="flex h-[50px] shrink-0 items-center bg-linear-to-r from-[#3b3532] to-[#332a28] font-['Open_Sans','Noto_Sans_CJK_TC',sans-serif] text-white">
        <button aria-label="Start" className="flex h-full w-[60px] items-center justify-center">
            <Svg w={20}><path d="M0 3L8.500 1.800V9.500H0ZM9.500 1.600L20 0V9.500H9.500ZM0 10.500H8.500V18.200L0 17ZM9.500 10.500H20V20L9.500 18.400Z" fill="#fff" /></Svg>
        </button>
        <div className="ml-[3px] flex h-full">
            {apps.map(({ name, icon, bar, multi, active }) => (
                <button key={name} aria-label={name} className={clsx("relative flex h-full w-[62px] items-center justify-center", active && "bg-[#5f5754]")}>
                    {icon}
                    {bar && (
                        <span className={clsx("absolute bottom-0 flex h-[3px] bg-[#76b9ed]", active ? "w-full" : "w-[51px]")}>
                            {multi && <span className="ml-auto w-[11px] border-l border-[#3a4a58] bg-[#5a8cb8]"></span>}
                        </span>
                    )}
                </button>
            ))}
        </div>
        <div className="ml-auto flex h-full items-center">
            <button aria-label="Show hidden icons" className="flex w-8 justify-center"><Svg w={16} h={9}><path d="M0.500 8.500L8 1L15.500 8.500" stroke="#fff" strokeWidth="1.200" /></Svg></button>
            <button aria-label="Microphone" className="flex w-7 justify-center">
                <Svg w={14} h={20}><rect x="2.500" y="0" width="9" height="14" rx="1.500" fill="#fff" /><path d="M0.700 10V13Q0.700 16 4 16H10Q13.300 16 13.300 13V10M7 16V19M3.500 19.300H10.500" stroke="#fff" strokeWidth="1.200" /></Svg>
            </button>
            <button aria-label="Volume" className="flex w-8 justify-center">
                <Svg w={21} h={18}><path d="M1 6.500H3.500L7.500 2.500V15.500L3.500 11.500H1Z" stroke="#fff" strokeWidth="1.100" /><path d="M10.500 7.500V10.500M13.500 5Q16 9 13.500 13M17 2Q21 9 17 16" stroke="#fff" strokeWidth="1.200" /></Svg>
            </button>
            <button aria-label="Battery" className="flex w-[29px] justify-center">
                <Svg w={20} h={14}><path d="M5 3.500H17.500V12.500H5V9M17.500 6H19.300V10H17.500" stroke="#fff" strokeWidth="1.200" /><path d="M7 5h6v6h-6zM0.500 2.500h5v3q-1 2-2.500 2t-2.500-2z" fill="#fff" /><path d="M1.500 0V3M4.500 0V3M3 7V12.500H5" stroke="#fff" /></Svg>
            </button>
            <button className="w-[29px] text-[18px] font-medium">英</button>
            <button className="ml-3 flex size-5 items-center justify-center bg-white text-black" aria-label="Input method">
                <Svg w={14}><path d="M5 1L2.500 4.500H11.500V10Q11.500 12.500 9 12.500H7" stroke="#111" strokeWidth="1.500" /></Svg>
            </button>
            <time className="ml-[10px] w-[100px] text-center text-[15px] leading-[23px]">下午 08:42<br />2021/5/1</time>
            <button aria-label="Notifications" className="relative ml-[10px] h-7 w-[30px]">
                <Svg w={21} h={19} className="absolute top-0 left-0"><path d="M0 0H20.500V15H11L7 18.500V15H0Z" fill="#fff" /><path d="M4 4.500H17M4 8H17M4 11.500H11" stroke="#3b3532" strokeWidth="1.300" /></Svg>
                <span className="absolute top-[9px] left-[9px] flex size-5 items-center justify-center rounded-full border border-[#8a8684] bg-[#3a3432] text-[14px] leading-none">3</span>
            </button>
            <span className="ml-4 mr-[5px] h-[50px] w-px bg-[#7a7472]"></span>
        </div>
    </footer>
)

const App = () => (
    <div className="flex h-screen min-h-[900px] flex-col overflow-hidden bg-[#1d1f21]">
        <div className="flex min-h-0 flex-1">
            <div className="flex w-[9px] shrink-0 flex-col bg-[#1c1c1c]">
                <span className="h-[42px] bg-[#435272]"></span>
                <span className="h-[85px] bg-[#3c3c3c]"></span>
            </div>
            <main className="flex min-w-0 flex-1 flex-col border-t border-[#666] bg-[#8a8a8a] font-['Inter',sans-serif] text-[15px] leading-5 text-[#0c0c0c] [font-feature-settings:'calt'_0]">
                <TitleBar />
                <MainToolbar />
                <div className="grid min-h-0 flex-1 grid-cols-[minmax(0,712fr)_minmax(0,253fr)_minmax(0,502fr)_minmax(0,425fr)] gap-[3px] pr-px">
                    <div className="grid min-h-0 grid-cols-[minmax(0,1fr)] grid-rows-[minmax(0,458fr)_minmax(0,434fr)] gap-[2px]">
                        <Scene />
                        <Game />
                    </div>
                    <Hierarchy />
                    <Project />
                    <Inspector />
                </div>
                <div className="h-[26px] shrink-0"></div>
            </main>
            <div className="flex w-[9px] shrink-0 flex-col bg-[#1c1e20]">
                <span className="h-[42px] bg-[#e2e3e1]"></span>
                <span className="h-[85px] bg-[#444]"></span>
            </div>
        </div>
        <div className="flex h-[9px] shrink-0 bg-[#1f2427]">
            <span className="w-[89px] bg-[#131313]"></span>
            <span className="w-[210px] bg-[#2d2d2d]"></span>
        </div>
        <Taskbar />
    </div>
)

export default App;
